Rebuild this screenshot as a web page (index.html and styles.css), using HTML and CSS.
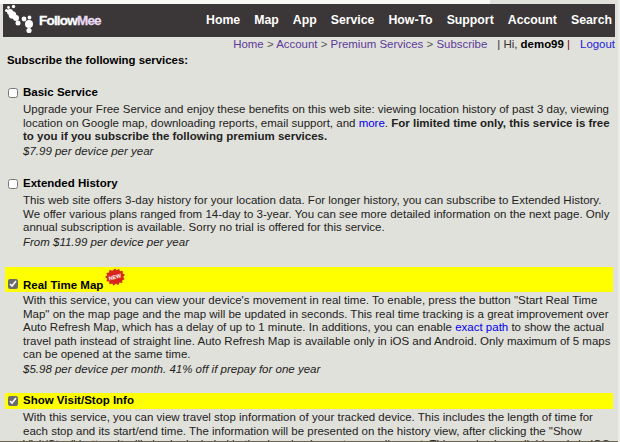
FILE: index.html
```html
<!DOCTYPE html>
<html>
<head>
<meta charset="utf-8">
<title>FollowMee</title>
<link rel="stylesheet" href="styles.css">
</head>
<body>
<div class="strip"></div>
<div class="page">
  <header class="topbar">
    <div class="brand">
      <svg class="paw" width="30" height="32" viewBox="0 0 30 32">
        <circle cx="8.500" cy="11" r="3.800" fill="#fff"/><circle cx="6" cy="8" r="3" fill="#fff"/><circle cx="12" cy="14" r="3" fill="#fff"/>
        <circle cx="2.500" cy="6.500" r="1.500" fill="#fff"/><circle cx="4.500" cy="3.500" r="1.400" fill="#fff"/><circle cx="9.500" cy="2.500" r="1.700" fill="#fff"/>
        <circle cx="14" cy="19" r="2.500" fill="#fff"/>
        <circle cx="20" cy="15" r="2.400" fill="#fff"/><circle cx="25.500" cy="13.500" r="1.900" fill="#fff"/><circle cx="25" cy="20" r="4" fill="#fff"/>
        <circle cx="25" cy="26.500" r="2.600" fill="#fff"/>
      </svg>
      <span class="logotext">Follow<span class="logomee">Mee</span></span>
    </div>
    <nav class="menu">
      <a>Home</a><a>Map</a><a>App</a><a>Service</a><a>How-To</a><a>Support</a><a>Account</a><a>Search</a>
    </nav>
  </header>
  <div class="crumbs">
    <a class="v">Home</a> <span class="sep">&gt;</span> <a class="v">Account</a> <span class="sep">&gt;</span> <a class="v">Premium Services</a> <span class="sep">&gt;</span> <a class="v">Subscribe</a><span class="bar1">|</span> Hi, <b>demo99</b> <span class="bar2">|</span><a class="logout">Logout</a>
  </div>
  <h1 class="title">Subscribe the following services:</h1>

  <section class="svc first">
    <div class="head"><input type="checkbox"><span class="name">Basic Service</span></div>
    <p class="body">Upgrade your Free Service and enjoy these benefits on this web site: viewing location history of past 3 day, viewing<br>location on Google map, downloading reports, email support, and <a class="l">more</a>. <b>For limited time only, this service is free<br>to you if you subscribe the following premium services.</b></p>
    <p class="price">$7.99 per device per year</p>
  </section>

  <section class="svc second">
    <div class="head"><input type="checkbox"><span class="name">Extended History</span></div>
    <p class="body">This web site offers 3-day history for your location data. For longer history, you can subscribe to Extended History.<br>We offer various plans ranged from 14-day to 3-year. You can see more detailed information on the next page. Only<br>annual subscription is available. Sorry no trial is offered for this service.</p>
    <p class="price">From $11.99 per device per year</p>
  </section>

  <section class="svc third">
    <div class="head hl tall"><input type="checkbox" checked><span class="name">Real Time Map</span>
      <svg class="new" width="20" height="19" viewBox="0 0 22 20"><polygon fill="#d8261c" points="11,0 13,2 15.500,0.500 16.500,3 19.500,2.500 19.500,5.500 22,7 20,9.500 21.500,12 19,13 19,16 16,15.500 14.500,18.500 12,16.500 9.500,19 8,16.500 5,17.500 4.500,14.500 1.500,14 2.500,11.500 0,9.500 2.500,7.500 1.500,5 4.500,4.500 5,1.500 8,2.500"/><text x="11" y="11.500" class="newt" transform="rotate(-15 11 10)" text-anchor="middle">NEW</text></svg>
    </div>
    <p class="body">With this service, you can view your device's movement in real time. To enable, press the button "Start Real Time<br>Map" on the map page and the map will be updated in seconds. This real time tracking is a great improvement over<br>Auto Refresh Map, which has a delay of up to 1 minute. In additions, you can enable <a class="l">exact path</a> to show the actual<br>travel path instead of straight line. Auto Refresh Map is available only in iOS and Android. Only maximum of 5 maps<br>can be opened at the same time.</p>
    <p class="price">$5.98 per device per month. 41% off if prepay for one year</p>
  </section>

  <section class="svc fourth">
    <div class="head hl"><input type="checkbox" checked><span class="name">Show Visit/Stop Info</span></div>
    <p class="body">With this service, you can view travel stop information of your tracked device. This includes the length of time for<br>each stop and its start/end time. The information will be presented on the history view, after clicking the "Show<br>Visit/Stop" button. It will also be included in the download report or email report. This service is available only in iOS</p>
  </section>
</div>
<div class="edge"></div>
</body>
</html>
```
FILE: styles.css
```css
html, body { margin: 0; padding: 0; height: 442px; overflow: hidden; background: #e1e1db; }
body { position: relative; box-sizing: border-box; border-right: 2px solid #ecece8; font-family: "Liberation Sans", Arial, sans-serif; font-size: 11.500px; line-height: 13.500px; color: #222; }
.strip { height: 4px; width: 490px; background: #f8f8f6; }
.page { padding: 0 3px 0 3px; }
.topbar { height: 33px; background: #3b3637; display: flex; justify-content: space-between; align-items: center; padding-right: 3px; }
.brand { display: flex; align-items: center; }
.paw { margin: -1px 0 0 1px; flex: none; }
.logotext { margin: 0 0 0 5px; font-weight: bold; font-size: 13.500px; letter-spacing: -0.8px; color: #fff; -webkit-text-stroke: 0.3px #fff; }
.logomee { color: #e8d9f4; -webkit-text-stroke-color: #e8d9f4; }
.menu { display: flex; gap: 14px; }
.menu a { color: #fff; font-weight: bold; font-size: 12.300px; }
.crumbs { text-align: right; font-size: 11.450px; line-height: 14px; color: #333; }
.v { color: #5a3a9a; }
.sep { color: #555; }
.bar1 { margin-left: 10px; }
.bar2 { color: #8b0000; }
.logout { color: #2222dd; margin-left: 10px; }
.crumbs b { color: #000; }
.title { margin: 2px 0 0 4px; font-size: 11.400px; line-height: 14px; font-weight: bold; color: #000; }
.first { margin-top: 18px; }
.second { margin-top: 18px; }
.third { margin-top: 18px; }
.fourth { margin-top: 17px; }
.head { display: flex; align-items: center; height: 16px; margin: 0 0 0 2px; }
.hl { margin-right: 2px; }
.head input { width: 10px; height: 10px; margin: 0 5px 0 3px; flex: none; accent-color: #6b6b6b; }
.name { font-weight: bold; color: #000; font-size: 11.500px; }
.hl { background: #ffff00; }
.tall { height: 25px; align-items: flex-end; }
.tall input { margin-bottom: 3px; }
.tall .name { line-height: 14px; }
.new { margin: 0 0 5px 2px; }
.newt { font: bold 6px "Liberation Sans", sans-serif; fill: #fff; }
.body { margin: 2px 0 0 20px; white-space: nowrap; }
.price { margin: 1px 0 0 20px; font-style: italic; font-size: 11.500px; }
.l { color: #0000ee; }
.edge { position: absolute; left: 0; right: -2px; bottom: 0; height: 1px; background: #6a6350; }
```
